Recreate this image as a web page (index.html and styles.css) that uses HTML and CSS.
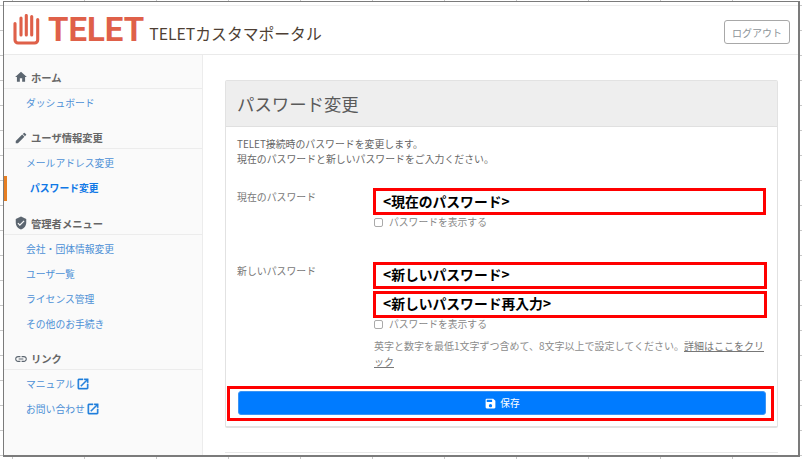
FILE: index.html
```html
<!DOCTYPE html>
<html lang="ja">
<head>
<meta charset="utf-8">
<title>TELETカスタマポータル</title>
<link rel="stylesheet" href="styles.css">
</head>
<body>
<div class="window">
  <header class="header">
    <svg class="logo-mark" viewBox="0 0 27 31" aria-hidden="true"><path d="M2 9.5V26a3 3 0 0 0 3 3H21.7a3 3 0 0 0 3-3V5.5M8 4V21M13.3 1.5V21M18.7 2.5V21" fill="none" stroke="#df6049" stroke-width="3.1" stroke-linecap="round"/></svg>
    <span class="logo-text">TELET</span>
    <span class="portal-title">TELETカスタマポータル</span>
    <button class="logout" type="button">ログアウト</button>
  </header>
  <div class="layout">
    <nav class="sidebar">
      <h2 class="nav-head first"><svg class="nav-icon" viewBox="0 0 24 24"><path d="M10 20v-6h4v6h5v-8h3L12 3 2 12h3v8z"/></svg>ホーム</h2>
      <ul class="nav-list">
        <li><a class="nav-link">ダッシュボード</a></li>
      </ul>
      <h2 class="nav-head"><svg class="nav-icon" viewBox="0 0 24 24"><path d="M3 17.25V21h3.75L17.81 9.94l-3.75-3.75L3 17.25zM20.71 7.04a1 1 0 0 0 0-1.41l-2.34-2.34a1 1 0 0 0-1.41 0l-1.83 1.83 3.75 3.75 1.83-1.83z"/></svg>ユーザ情報変更</h2>
      <ul class="nav-list">
        <li><a class="nav-link">メールアドレス変更</a></li>
        <li><a class="nav-link active">パスワード変更</a></li>
      </ul>
      <h2 class="nav-head"><svg class="nav-icon" viewBox="0 0 24 24"><path d="M12 1L3 5v6c0 5.55 3.84 10.74 9 12 5.16-1.26 9-6.45 9-12V5l-9-4zm-2 16l-4-4 1.41-1.41L10 14.17l6.59-6.59L18 9l-8 8z"/></svg>管理者メニュー</h2>
      <ul class="nav-list">
        <li><a class="nav-link">会社・団体情報変更</a></li>
        <li><a class="nav-link">ユーザ一覧</a></li>
        <li><a class="nav-link">ライセンス管理</a></li>
        <li><a class="nav-link">その他のお手続き</a></li>
      </ul>
      <h2 class="nav-head"><svg class="nav-icon" viewBox="0 0 24 24"><path d="M3.9 12c0-1.71 1.39-3.1 3.1-3.1h4V7H7c-2.76 0-5 2.24-5 5s2.24 5 5 5h4v-1.9H7c-1.71 0-3.1-1.39-3.1-3.1zM8 13h8v-2H8v2zm9-6h-4v1.9h4c1.71 0 3.1 1.39 3.1 3.1s-1.39 3.1-3.1 3.1h-4V17h4c2.76 0 5-2.24 5-5s-2.24-5-5-5z"/></svg>リンク</h2>
      <ul class="nav-list">
        <li><a class="nav-link">マニュアル<svg class="ext-icon" viewBox="0 0 24 24"><path d="M19 19H5V5h7V3H5a2 2 0 0 0-2 2v14a2 2 0 0 0 2 2h14c1.1 0 2-.9 2-2v-7h-2v7zM14 3v2h3.59l-9.83 9.83 1.41 1.41L19 6.41V10h2V3h-7z"/></svg></a></li>
        <li><a class="nav-link">お問い合わせ<svg class="ext-icon" viewBox="0 0 24 24"><path d="M19 19H5V5h7V3H5a2 2 0 0 0-2 2v14a2 2 0 0 0 2 2h14c1.1 0 2-.9 2-2v-7h-2v7zM14 3v2h3.59l-9.83 9.83 1.41 1.41L19 6.41V10h2V3h-7z"/></svg></a></li>
      </ul>
    </nav>
    <main class="main">
      <section class="card">
        <h1 class="card-title">パスワード変更</h1>
        <div class="card-body">
          <p class="intro">TELET接続時のパスワードを変更します。<br>現在のパスワードと新しいパスワードをご入力ください。</p>
          <div class="field field-current">
            <div class="field-label">現在のパスワード</div>
            <div class="field-control">
              <div class="mask mask-short">&lt;現在のパスワード&gt;</div>
              <label class="check"><span class="checkbox"></span>パスワードを表示する</label>
            </div>
          </div>
          <div class="field field-new">
            <div class="field-label">新しいパスワード</div>
            <div class="field-control">
              <div class="mask">&lt;新しいパスワード&gt;</div>
              <div class="mask mask-second">&lt;新しいパスワード再入力&gt;</div>
              <label class="check"><span class="checkbox"></span>パスワードを表示する</label>
              <p class="help">英字と数字を最低1文字ずつ含めて、8文字以上で設定してください。<a class="help-link">詳細はここをクリック</a></p>
            </div>
          </div>
          <div class="save-mark">
            <button class="save" type="button"><svg class="save-icon" viewBox="0 0 24 24"><path d="M17 3H5a2 2 0 0 0-2 2v14a2 2 0 0 0 2 2h14c1.1 0 2-.9 2-2V7l-4-4zm-5 16c-1.66 0-3-1.34-3-3s1.34-3 3-3 3 1.34 3 3-1.34 3-3 3zm3-10H5V5h10v4z"/></svg>保存</button>
          </div>
        </div>
      </section>
      <div class="footer-line"></div>
    </main>
  </div>
</div>
</body>
</html>
```

FILE: styles.css
```css
* { box-sizing: border-box; }
html, body { margin: 0; padding: 0; }
body {
  width: 802px;
  height: 459px;
  overflow: hidden;
  padding: 1px 2px 2px 3px;
  font-family: "Noto Sans CJK JP", "Noto Sans", sans-serif;
  font-size: 9.9px;
  color: #666;
  background-color: #fff;
  background-image:
    repeating-linear-gradient(90deg, transparent 0 12px, #c8c8c8 12px 13px, transparent 13px 72px),
    repeating-linear-gradient(180deg, transparent 0 5px, #c8c8c8 5px 6px, transparent 6px 25px);
}
.window {
  height: 456px;
  display: flex;
  flex-direction: column;
  background: #fff;
  border: solid #7b7b7b;
  border-width: 1px 2px 2px 1px;
}
.header {
  flex: none;
  height: 50px;
  margin-top: 3px;
  padding: 7px 8px 0 9px;
  display: flex;
  align-items: flex-start;
  border-top: 1px solid #eee;
  border-bottom: 1px solid #eaeaea;
}
.logo-mark { width: 27px; height: 31px; flex: none; margin-top: 1px; }
.logo-text {
  margin: -2px 0 0 8px;
  font-family: "Roboto", sans-serif;
  font-size: 33px;
  line-height: 38px;
  font-weight: 700;
  color: #df6049;
}
.portal-title {
  margin: 10px 0 0 5px;
  font-size: 15.8px;
  line-height: 22px;
  color: #4e3f34;
  white-space: nowrap;
}
.logout {
  margin: 7px 0 0 auto;
  width: 66px;
  height: 24px;
  padding: 0;
  font: inherit;
  font-size: 10px;
  color: #8d9499;
  background: #fff;
  border: 1px solid #a8a8a8;
  border-radius: 3px;
}
.layout { flex: 1; min-height: 0; display: flex; }
.sidebar {
  flex: none;
  width: 199px;
  background: #fafafa;
  border-right: 1px solid #ececec;
}
.nav-head {
  display: flex;
  align-items: center;
  margin: 12px 0 0;
  height: 22px;
  padding: 0 0 0 10px;
  font-size: 10.3px;
  font-weight: 700;
  color: #666;
  border-bottom: 1px solid #ececec;
}
.nav-head.first { margin-top: 11.5px; }
.nav-icon { width: 14px; height: 14px; margin-right: 3px; fill: #5c6670; flex: none; }
.nav-list { list-style: none; margin: 1.5px 0 0; padding: 0; }
.nav-link {
  display: flex;
  align-items: center;
  height: 25px;
  padding-left: 22px;
  font-size: 9.8px;
  color: #4d90d6;
}
.nav-link.active {
  padding-left: 23px;
  border-left: 3px solid #e67e22;
  font-weight: 700;
  color: #1078e6;
}
.ext-icon { width: 14px; height: 14px; margin-left: 1px; fill: #1f7fdc; stroke: #1f7fdc; stroke-width: 0.7; flex: none; }
.main {
  flex: 1;
  min-width: 0;
  padding: 25px 20px 0 22px;
  background: #fff;
}
.card {
  height: 348px;
  background: #fff;
  border: 1px solid #e2e2e2;
  border-radius: 2px;
  border-bottom-width: 2px;
}
.card-title {
  margin: 0;
  height: 46px;
  padding-left: 11px;
  display: flex;
  align-items: center;
  font-size: 17.4px;
  font-weight: 400;
  color: #5a5a5a;
  background: #eee;
  border-bottom: 1px solid #e0e0e0;
}
.card-body { padding: 10px 0 0 1px; }
.intro { margin: 0 0 21px 10px; line-height: 15px; color: #666; }
.field { display: grid; grid-template-columns: 136px 394px; margin-left: 10px; }
.field-current { height: 73.5px; }
.field-label { line-height: 18px; color: #777; }
.mask {
  height: 27px;
  width: 394px;
  padding: 0 0 2px 7px;
  display: flex;
  align-items: center;
  font-size: 13.8px;
  font-weight: 700;
  color: #000;
  background: #fff;
  border: 3px solid #f00;
}
.mask-short { width: 393px; }
.mask-second { margin-top: 2px; }
.check {
  display: flex;
  align-items: center;
  height: 14px;
  margin-left: 1px;
  font-size: 9.8px;
  color: #888;
}
.field-new .check { margin-top: -0.5px; }
.checkbox {
  width: 9px;
  height: 9px;
  margin-right: 6px;
  flex: none;
  background: #fff;
  border: 1px solid #aaa;
  border-radius: 2px;
}
.help { width: 390px; margin: 7px 0 0 1px; font-size: 10px; line-height: 16px; color: #8c8c8c; }
.help-link { color: #777; text-decoration: underline; }
.save-mark {
  margin: 16px 3px 0 0;
  height: 35px;
  padding: 2px 5px 0 8px;
  background: #fff;
  border: 3px solid #f00;
}
.save {
  width: 100%;
  height: 24px;
  padding: 0;
  display: flex;
  align-items: center;
  justify-content: center;
  font: inherit;
  font-size: 9.7px;
  color: #fff;
  background: #007bff;
  border: 1px solid #3b94f5;
  border-radius: 3px;
}
.save-icon { width: 13px; height: 13px; margin-right: 3px; fill: #fff; }
.footer-line { height: 0; margin-top: 24px; border-top: 1px solid #e8e8e8; }
```
